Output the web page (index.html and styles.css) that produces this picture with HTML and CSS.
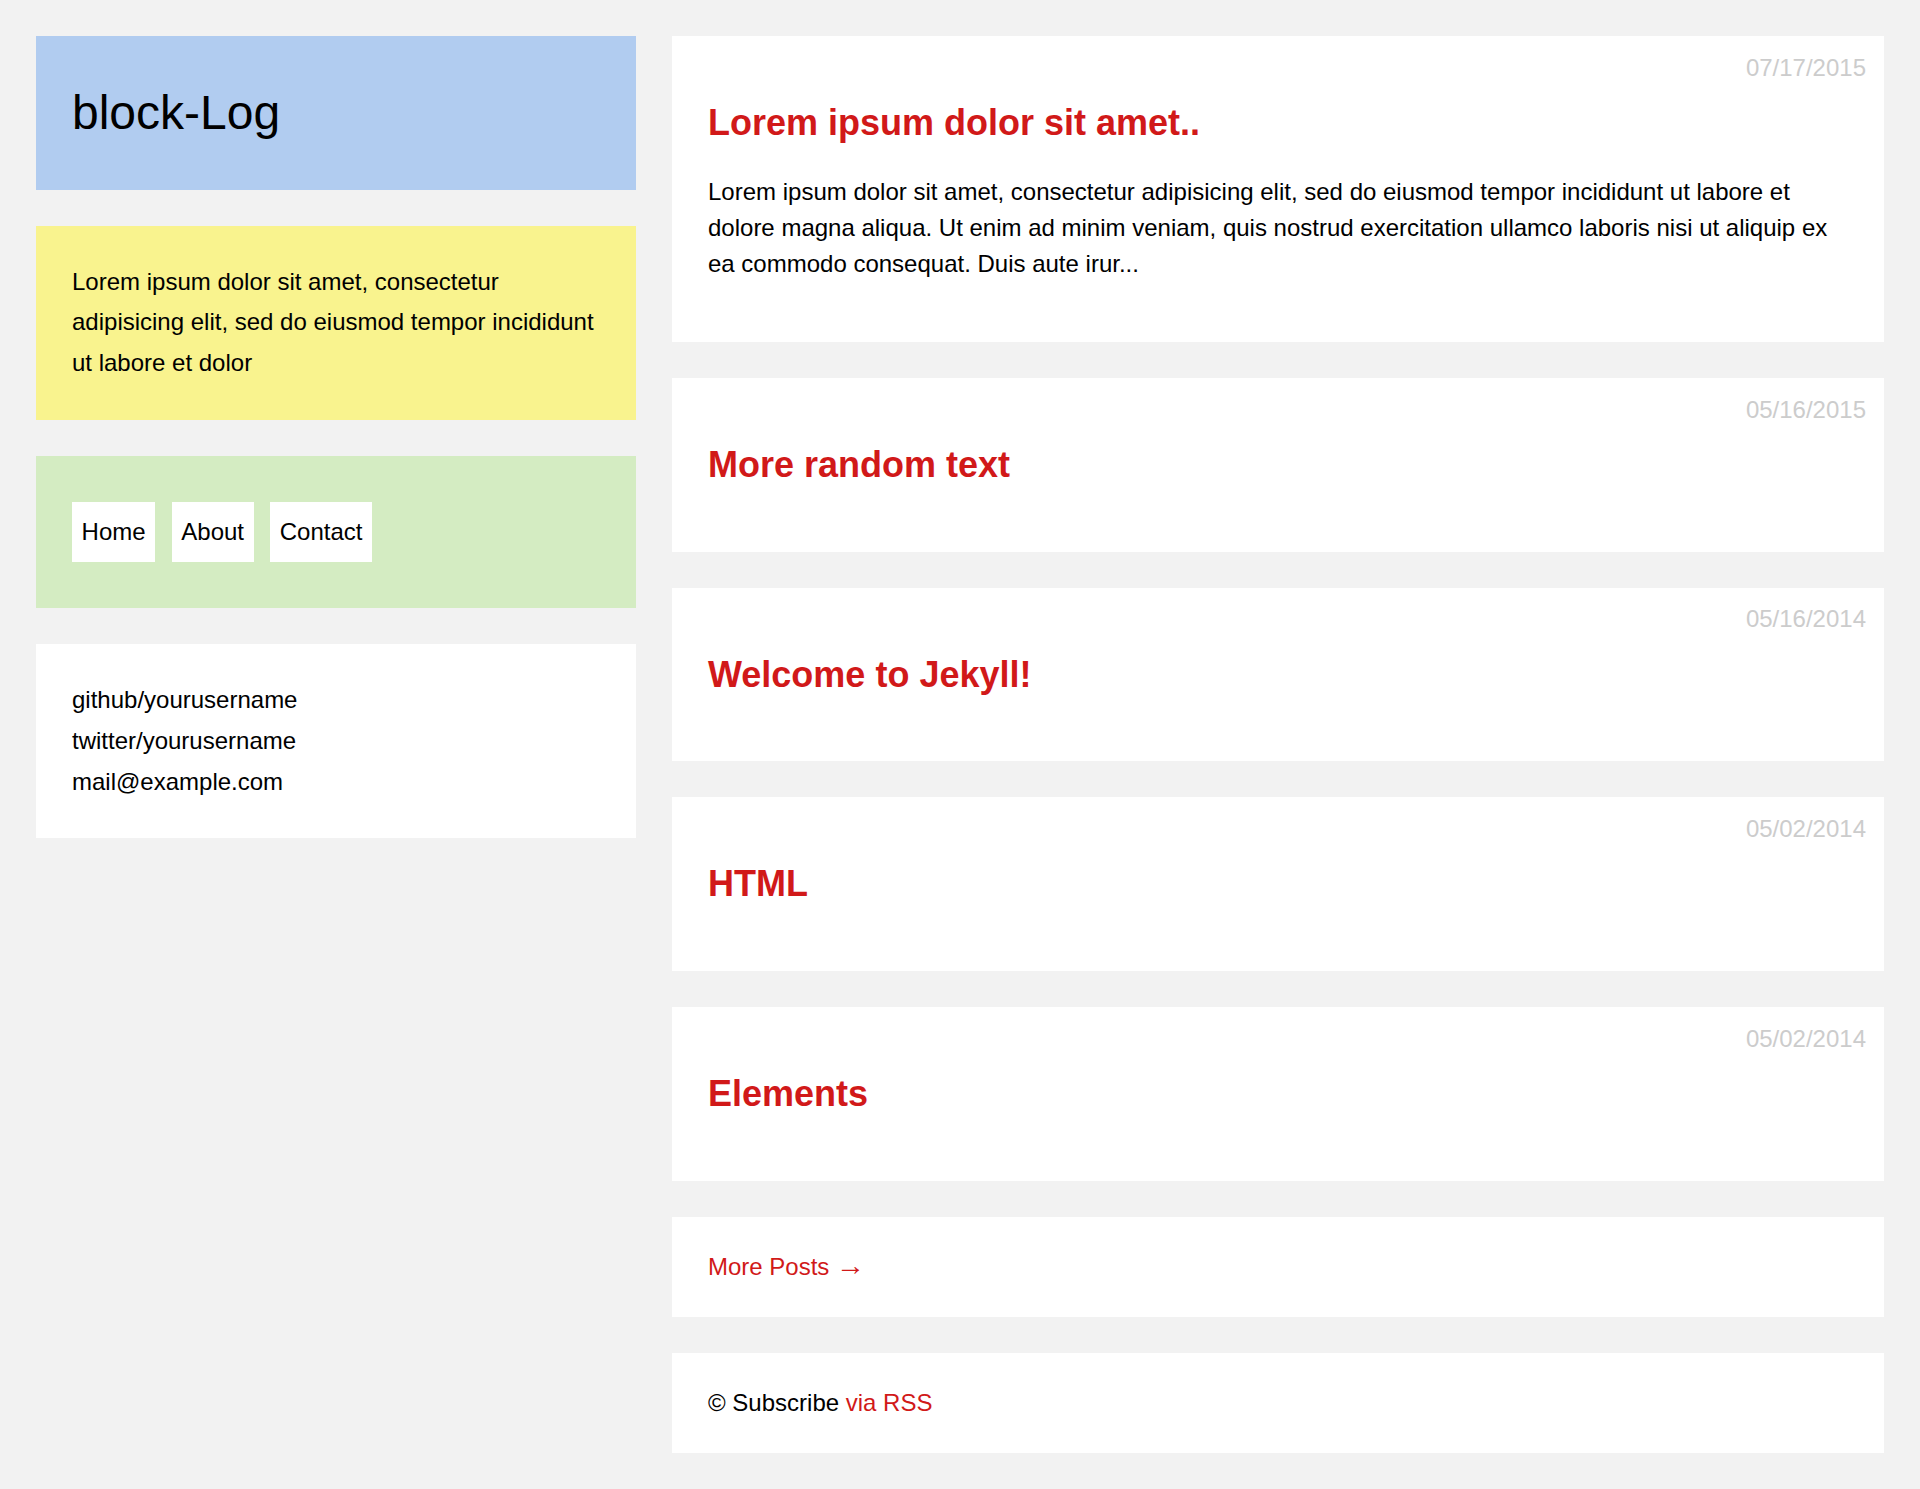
FILE: index.html
```html
<!DOCTYPE html>
<html lang="en">
<head>
<meta charset="utf-8">
<title>block-Log</title>
<link rel="stylesheet" href="styles.css">
</head>
<body>
<div class="layout">
  <aside class="sidebar">
    <header class="box box-blue"><h1 class="site-title">block-Log</h1></header>
    <section class="box box-yellow">Lorem ipsum dolor sit amet, consectetur adipisicing elit, sed do eiusmod tempor incididunt ut labore et dolor</section>
    <nav class="box box-green">
      <a class="nav-link" href="#">Home</a>
      <a class="nav-link" href="#">About</a>
      <a class="nav-link" href="#">Contact</a>
    </nav>
    <section class="box box-white">
      <a class="plain-link" href="#">github/yourusername</a>
      <a class="plain-link" href="#">twitter/yourusername</a>
      <a class="plain-link" href="#">mail@example.com</a>
    </section>
  </aside>
  <main class="content">
    <article class="post">
      <time class="post-date">07/17/2015</time>
      <h2 class="post-title">Lorem ipsum dolor sit amet..</h2>
      <p class="post-excerpt">Lorem ipsum dolor sit amet, consectetur adipisicing elit, sed do eiusmod tempor incididunt ut labore et dolore magna aliqua. Ut enim ad minim veniam, quis nostrud exercitation ullamco laboris nisi ut aliquip ex ea commodo consequat. Duis aute irur...</p>
    </article>
    <article class="post">
      <time class="post-date">05/16/2015</time>
      <h2 class="post-title">More random text</h2>
    </article>
    <article class="post">
      <time class="post-date">05/16/2014</time>
      <h2 class="post-title">Welcome to Jekyll!</h2>
    </article>
    <article class="post">
      <time class="post-date">05/02/2014</time>
      <h2 class="post-title">HTML</h2>
    </article>
    <article class="post">
      <time class="post-date">05/02/2014</time>
      <h2 class="post-title">Elements</h2>
    </article>
    <div class="strip"><a class="red-link" href="#">More Posts <span class="arrow">→</span></a></div>
    <footer class="strip">© Subscribe <a class="red-link" href="#">via RSS</a></footer>
  </main>
</div>
</body>
</html>
```
FILE: styles.css
```css
* { box-sizing: border-box; }
html, body { margin: 0; }
body {
  background: #f2f2f2;
  color: #000;
  font-family: "Liberation Sans", Arial, sans-serif;
  font-size: 24px;
  padding: 36px;
}
a { color: inherit; text-decoration: none; }
.layout {
  display: grid;
  grid-template-columns: 600px 1fr;
  column-gap: 36px;
  align-items: start;
}
.sidebar, .content {
  display: flex;
  flex-direction: column;
  gap: 36px;
}
.box {
  padding: 36px;
  line-height: 1.7;
}
.box-blue { background: #b1ccf0; }
.box-yellow { background: #f9f38e; }
.box-green {
  background: #d4ecc2;
  padding-top: 46px;
  padding-bottom: 46px;
  display: flex;
  gap: 16.5px;
}
.box-white { background: #fff; }
.site-title {
  margin: 0;
  font-size: 48px;
  font-weight: 400;
  line-height: 1.7;
}
.nav-link {
  background: #fff;
  padding: 9.6px;
}
.plain-link { display: block; }
.post {
  position: relative;
  background: #fff;
  padding: 36px;
}
.post-date {
  position: absolute;
  top: 17.8px;
  right: 18px;
  color: #ccc;
}
.post-title {
  margin: 30px 0 29.76px;
  font-size: 36px;
  line-height: 42px;
  font-weight: 700;
  color: #d11919;
}
.post-excerpt {
  margin: 0 0 24px;
  line-height: 1.5;
}
.strip {
  background: #fff;
  padding: 36px;
  line-height: 28px;
}
.red-link { color: #d11919; }
.arrow {
  font-size: 29px;
  line-height: 0;
}
```
